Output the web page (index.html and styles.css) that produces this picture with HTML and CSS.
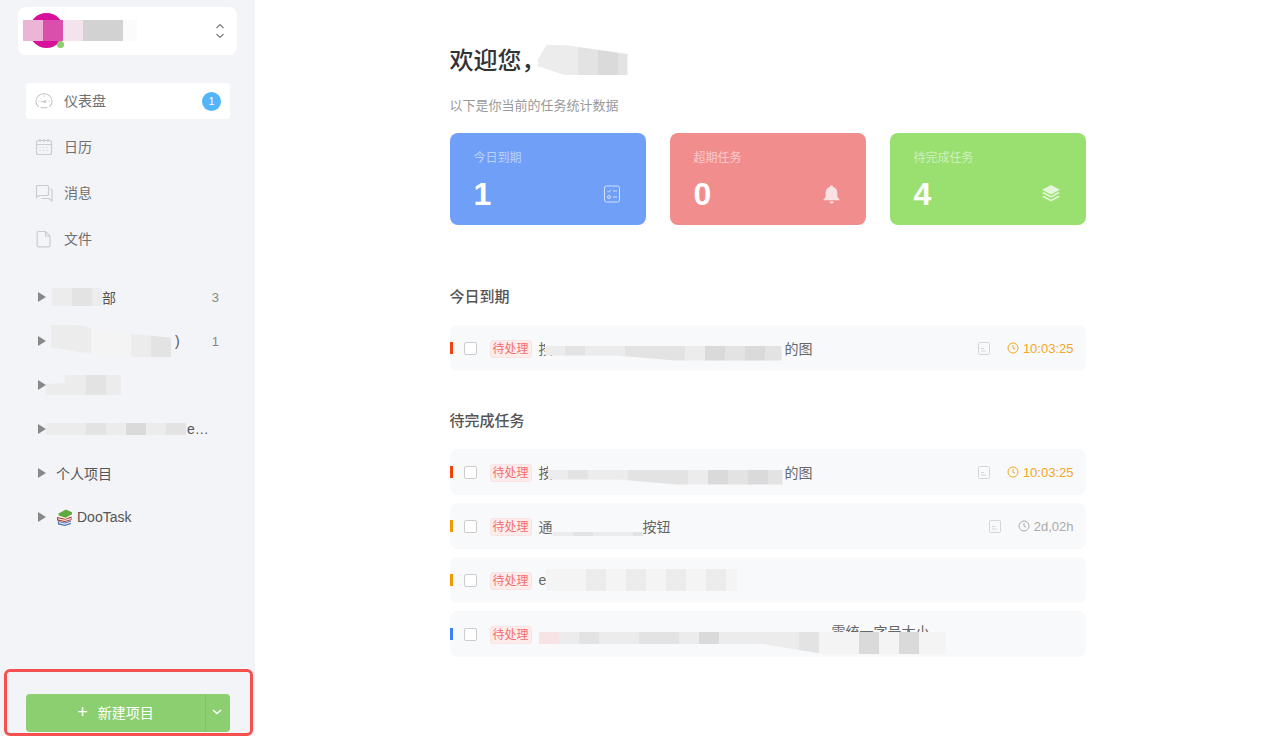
FILE: index.html
```html
<!DOCTYPE html>
<html lang="zh-CN">
<head>
    <meta charset="UTF-8">
    <meta name="viewport" content="width=device-width, initial-scale=1.0">
    <title>DooTask</title>
    <link rel="stylesheet" href="styles.css">
</head>
<body>
    <aside class="sidebar">
        <div class="user-box">
            <span class="avatar"><span class="online-dot"></span></span>
            <span class="redact redact-user"><i class="u1"></i><i class="u2"></i><i class="u3"></i><i class="u4"></i><i class="u4"></i><i class="u5"></i></span>
            <svg class="user-arrows" width="10" height="16" viewBox="0 0 10 16" fill="none" stroke="#777" stroke-width="1.1">
                <path d="M1.5 5 5 1.5 8.5 5"/>
                <path d="M1.5 11 5 14.5 8.5 11"/>
            </svg>
        </div>

        <ul class="menu">
            <li class="menu-item active">
                <svg class="menu-icon" width="18" height="18" viewBox="0 0 18 18" fill="none" stroke="#ccc" stroke-width="1.2">
                    <path d="M4 14.800C2.100 13.600 1 11.800 1 9.600a8 8 0 0 1 16 0c0 2.200-1.100 4-3 5.200"/>
                    <path d="M5.500 15.600h7M9 9.600H5.800M9 3.400v1.400M3.400 9h1.200M13.400 9h1.200"/>
                    <circle cx="10" cy="9.600" r="1"/>
                </svg>
                <span class="menu-label">仪表盘</span>
                <span class="menu-badge">1</span>
            </li>
            <li class="menu-item">
                <svg class="menu-icon" width="18" height="18" viewBox="0 0 18 18" fill="none" stroke="#ccc" stroke-width="1.2">
                    <rect x="1.5" y="2.5" width="15" height="14" rx="1.5"/>
                    <path d="M1.5 6.5h15M5 1v3M9 1v3M13 1v3"/>
                    <path d="M4.5 9.5h2M8 9.5h2M11.500 9.500h2M4.500 12.500h2M8 12.500h2M11.500 12.500h2" stroke-dasharray="1 1"/>
                </svg>
                <span class="menu-label">日历</span>
            </li>
            <li class="menu-item">
                <svg class="menu-icon" width="18" height="18" viewBox="0 0 18 18" fill="none" stroke="#ccc" stroke-width="1.2">
                    <path d="M2.800 1.500h9.400a1.300 1.300 0 0 1 1.300 1.300v7.400a1.300 1.300 0 0 1-1.300 1.300H4.500l-3 2V2.800a1.300 1.300 0 0 1 1.300-1.300z"/>
                    <path d="M15 5h1a1 1 0 0 1 1 1v11l-3-2.500H6.500"/>
                </svg>
                <span class="menu-label">消息</span>
            </li>
            <li class="menu-item">
                <svg class="menu-icon" width="18" height="18" viewBox="0 0 18 18" fill="none" stroke="#ccc" stroke-width="1.2">
                    <path d="M3.500 1.500h7l4.500 4.500v9.500a1.300 1.300 0 0 1-1.300 1.300H3.500a1.300 1.300 0 0 1-1.300-1.300V2.800a1.300 1.300 0 0 1 1.300-1.300z"/>
                    <path d="M10.500 1.500V6H15"/>
                </svg>
                <span class="menu-label">文件</span>
            </li>
        </ul>

        <ul class="projects">
            <li class="project">
                <span class="caret"></span>
                <span class="project-name"><span class="redact redact-p1"><i class="s1"></i><i class="s2"></i><i class="s1"></i></span>部</span>
                <span class="project-count">3</span>
            </li>
            <li class="project">
                <span class="caret"></span>
                <span class="project-name"><span class="redact redact-p2"><i class="s1"></i><i class="s1"></i><i class="s0"></i><i class="s0"></i><i class="s1"></i><i class="s2"></i></span>)</span>
                <span class="project-count">1</span>
            </li>
            <li class="project">
                <span class="caret"></span>
                <span class="project-name"><span class="redact redact-p3"><i class="s1"></i><i class="s1"></i><i class="s2"></i><i class="s1"></i></span></span>
            </li>
            <li class="project">
                <span class="caret"></span>
                <span class="project-name"><span class="redact redact-p4"><i class="s1"></i><i class="s1"></i><i class="s2"></i><i class="s1"></i><i class="s3"></i><i class="s1"></i><i class="s2"></i></span>e…</span>
            </li>
            <li class="project">
                <span class="caret"></span>
                <span class="project-name">个人项目</span>
            </li>
            <li class="project">
                <span class="caret"></span>
                <svg class="book-icon" width="17" height="17" viewBox="0 0 17 17">
                    <path d="M2 12 9 13.500l6-2v3.500l-6 2-7-1.500z" fill="#4a6fb5"/>
                    <path d="M3 13 9 14.500l6-2v1.300L9 15.800 3 14.300z" fill="#eef0f4"/>
                    <path d="M1 8 9 9.500l6.500-2v3.500L9 13 1 11.500z" fill="#b8382f"/>
                    <path d="M2 9.300 9 10.800l6-1.800v1.200L9 12 2 10.500z" fill="#f2efe6"/>
                    <path d="M2.500 4.500 10 .5l6 2.800v2L9.500 9 2.500 6.500z" fill="#5fa83c"/>
                    <path d="M2.500 6.500 9.500 9l6-3.200v1.200L9.500 10 2.500 7.800z" fill="#f2efe6"/>
                </svg>
                <span class="project-name">DooTask</span>
            </li>
        </ul>

        <div class="new-project">
            <button class="new-btn"><span class="plus">+</span>新建项目</button>
            <button class="new-drop">
                <svg width="10" height="6" viewBox="0 0 10 6" fill="none" stroke="#fff" stroke-width="1.400"><path d="M1 1l4 3.500L9 1"/></svg>
            </button>
        </div>
        <div class="highlight-box"></div>
    </aside>

    <main class="content">
        <div class="dashboard">
            <h1 class="welcome">欢迎您，<span class="redact redact-name"><i class="s1"></i><i class="s1"></i><i class="s2"></i><i class="s3"></i><i class="s2"></i></span></h1>
            <p class="subtitle">以下是你当前的任务统计数据</p>

            <div class="stat-cards">
                <div class="stat-card blue">
                    <div class="stat-label">今日到期</div>
                    <div class="stat-row">
                        <span class="stat-num">1</span>
                        <svg class="stat-icon" width="16" height="18" viewBox="0 0 16 18" fill="none" stroke="#fff" stroke-width="1">
                            <rect x=".5" y="1" width="15" height="16" rx="2"/>
                            <path d="M3.500 6l1.200 1.200L7 4.800M9 6h4"/>
                            <circle cx="5" cy="12" r="1.500"/>
                            <path d="M9 12h4"/>
                        </svg>
                    </div>
                </div>
                <div class="stat-card red">
                    <div class="stat-label">超期任务</div>
                    <div class="stat-row">
                        <span class="stat-num">0</span>
                        <svg class="stat-icon big" width="19" height="21" viewBox="0 0 16 18" fill="#fff">
                            <path d="M8 1a1.300 1.300 0 0 1 1.300 1.300C11.600 3 13 5 13 7.500V11l2 2.500v.5H1v-.5L3 11V7.500C3 5 4.400 3 6.700 2.300A1.300 1.300 0 0 1 8 1z"/>
                            <path d="M6.200 15h3.600a1.800 1.800 0 0 1-3.600 0z"/>
                        </svg>
                    </div>
                </div>
                <div class="stat-card green">
                    <div class="stat-label">待完成任务</div>
                    <div class="stat-row">
                        <span class="stat-num">4</span>
                        <svg class="stat-icon big" width="20" height="20" viewBox="0 0 18 18" fill="#fff">
                            <path d="M9 1l8 4.200-8 4.300-8-4.300z"/>
                            <path d="M1 8l1.500-.8L9 10.700l6.500-3.500L17 8l-8 4.300z"/>
                            <path d="M1 11.400l1.500-.8L9 14.100l6.500-3.500 1.500.8-8 4.300z"/>
                        </svg>
                    </div>
                </div>
            </div>

            <h2 class="section-title first">今日到期</h2>
            <ul class="task-list">
                <li class="task">
                    <span class="task-bar red-bar"></span>
                    <span class="task-check"></span>
                    <span class="task-tag">待处理</span>
                    <span class="task-title">按<span class="redact redact-t1"><i class="s1"></i><i class="s2"></i><i class="s1"></i><i class="s1"></i><i class="s2"></i><i class="s2"></i><i class="s2"></i><i class="s1"></i><i class="s3"></i><i class="s2"></i><i class="s3"></i><i class="s2"></i></span>的图</span>
                    <svg class="task-file" width="12" height="13" viewBox="0 0 12 13" fill="none" stroke="#d4d6da"><rect x=".5" y=".5" width="11" height="12" rx="1"/><path d="M3 6.500h3M3 9h5"/></svg>
                    <span class="task-time soon"><svg width="12" height="12" viewBox="0 0 12 12" fill="none" stroke="currentColor"><circle cx="6" cy="6" r="5"/><path d="M6 3v3.200l2 1"/></svg>10:03:25</span>
                </li>
            </ul>

            <h2 class="section-title">待完成任务</h2>
            <ul class="task-list">
                <li class="task">
                    <span class="task-bar red-bar"></span>
                    <span class="task-check"></span>
                    <span class="task-tag">待处理</span>
                    <span class="task-title">按<span class="redact redact-t1 short"><i class="s1"></i><i class="s2"></i><i class="s1"></i><i class="s1"></i><i class="s2"></i><i class="s2"></i><i class="s2"></i><i class="s1"></i><i class="s3"></i><i class="s2"></i><i class="s3"></i><i class="s2"></i></span>的图</span>
                    <svg class="task-file" width="12" height="13" viewBox="0 0 12 13" fill="none" stroke="#d4d6da"><rect x=".5" y=".5" width="11" height="12" rx="1"/><path d="M3 6.500h3M3 9h5"/></svg>
                    <span class="task-time soon"><svg width="12" height="12" viewBox="0 0 12 12" fill="none" stroke="currentColor"><circle cx="6" cy="6" r="5"/><path d="M6 3v3.200l2 1"/></svg>10:03:25</span>
                </li>
                <li class="task">
                    <span class="task-bar orange-bar"></span>
                    <span class="task-check"></span>
                    <span class="task-tag">待处理</span>
                    <span class="task-title">通<span class="redact redact-t2"><i class="s1"></i><i class="s2"></i><i class="s1"></i><i class="s1"></i><i class="s2"></i></span>按钮</span>
                    <svg class="task-file" width="12" height="13" viewBox="0 0 12 13" fill="none" stroke="#d4d6da"><rect x=".5" y=".5" width="11" height="12" rx="1"/><path d="M3 6.500h3M3 9h5"/></svg>
                    <span class="task-time"><svg width="12" height="12" viewBox="0 0 12 12" fill="none" stroke="currentColor"><circle cx="6" cy="6" r="5"/><path d="M6 3v3.200l2 1"/></svg>2d,02h</span>
                </li>
                <li class="task">
                    <span class="task-bar orange-bar"></span>
                    <span class="task-check"></span>
                    <span class="task-tag">待处理</span>
                    <span class="task-title">e<span class="redact redact-t3"><i class="s0"></i><i class="s0"></i><i class="s1"></i><i class="s0"></i><i class="s1"></i><i class="s0"></i><i class="s1"></i><i class="s0"></i><i class="s1"></i><i class="s0"></i></span></span>
                </li>
                <li class="task">
                    <span class="task-bar blue-bar"></span>
                    <span class="task-check"></span>
                    <span class="task-tag">待处理</span>
                    <span class="task-title long">需统一字号大小<span class="redact redact-t4"><i class="s4"></i><i class="s1"></i><i class="s2"></i><i class="s1"></i><i class="s1"></i><i class="s2"></i><i class="s2"></i><i class="s1"></i><i class="s3"></i><i class="s1"></i><i class="s1"></i><i class="s1"></i><i class="s1"></i><i class="s2"></i><i class="s0"></i><i class="s0"></i><i class="s3"></i><i class="s0"></i><i class="s3"></i><i class="s0"></i><i class="s0"></i></span></span>
                </li>
            </ul>
        </div>
    </main>
</body>
</html>
```
FILE: styles.css
```css
* {
    margin: 0;
    padding: 0;
    box-sizing: border-box;
}

html, body {
    height: 100%;
    overflow: hidden;
}

body {
    display: flex;
    font-family: "Liberation Sans", "Noto Sans CJK SC", sans-serif;
    font-size: 14px;
    color: #555;
    background: #fff;
}

ul {
    list-style: none;
}

/* Mosaic blocks that hide names */
.redact {
    display: inline-flex;
    overflow: hidden;
    vertical-align: top;
}

.redact i {
    flex: 0 0 20px;
    height: 100%;
}

.s0 { background: #f4f4f5; }
.s1 { background: #ececed; }
.s2 { background: #e3e3e4; }
.s3 { background: #dadadb; }
.s4 { background: #f7e3e6; }

/* Sidebar */
.sidebar {
    position: relative;
    flex: 0 0 255px;
    height: 736px;
    background: #f3f4f7;
    padding: 7px 18px 0;
}

.user-box {
    position: relative;
    display: flex;
    align-items: center;
    justify-content: flex-end;
    height: 48px;
    padding-right: 12px;
    background: #fff;
    border-radius: 8px;
}

.avatar {
    position: absolute;
    left: 11px;
    top: 6px;
    width: 35px;
    height: 35px;
    border-radius: 50%;
    background: #d8119a;
}

.online-dot {
    position: absolute;
    right: 0;
    bottom: 0;
    width: 7px;
    height: 7px;
    border-radius: 50%;
    background: #8bcf70;
}

.redact-user {
    position: absolute;
    left: 5px;
    top: 13px;
    width: 114px;
    height: 21px;
}

.u1 { background: #edb5d5; }
.u2 { background: #d94fab; }
.u3 { background: #f4e2ec; }
.u4 { background: #d2d2d2; }
.u5 { background: #fbfbfb; }

.menu {
    margin: 28px 7px 0 8px;
}

.menu-item {
    display: flex;
    align-items: center;
    height: 36px;
    margin-bottom: 10px;
    padding: 0 9px;
    border-radius: 4px;
    color: #707070;
}

.menu-item.active {
    background: #fff;
}

.menu-icon {
    flex-shrink: 0;
    margin-right: 11px;
}

.menu-label {
    flex: 1;
    padding-bottom: 2px;
}

.menu-badge {
    width: 19px;
    height: 19px;
    line-height: 19px;
    text-align: center;
    font-size: 11px;
    color: #fff;
    background: #52b5fa;
    border-radius: 50%;
}

.projects {
    margin: 18px 0 0 20px;
}

.project {
    display: flex;
    align-items: center;
    height: 44px;
    width: 181px;
    color: #555;
}

.caret {
    flex-shrink: 0;
    width: 0;
    height: 0;
    margin-right: 10px;
    border-left: 8px solid #888;
    border-top: 5px solid transparent;
    border-bottom: 5px solid transparent;
}

.project-name {
    flex: 1;
    display: flex;
    align-items: center;
    white-space: nowrap;
}

.project-count {
    font-size: 13px;
    color: #888;
}

.redact-p1 {
    width: 50px;
    height: 18px;
    margin-left: -4px;
}

.redact-p2 {
    width: 121px;
    height: 32px;
    margin: 0 3px 0 -5px;
    clip-path: polygon(0 0, 22% 0, 45% 20%, 100% 40%, 100% 100%, 70% 100%, 25% 85%, 0 70%);
}

.redact-p3 {
    width: 75px;
    height: 20px;
    margin-left: -10px;
    clip-path: polygon(0 45%, 25% 40%, 25% 0, 100% 0, 100% 100%, 0 100%);
}

.redact-p4 {
    width: 141px;
    height: 12px;
    margin-left: -10px;
    flex-shrink: 0;
}

.book-icon {
    flex-shrink: 0;
    margin-right: 4px;
}

.new-project {
    position: absolute;
    left: 26px;
    top: 694px;
    display: flex;
    width: 204px;
    height: 38px;
}

.new-btn,
.new-drop {
    display: flex;
    align-items: center;
    justify-content: center;
    padding-bottom: 2px;
    border: none;
    background: #8bcf70;
    color: #fff;
    font: inherit;
}

.new-btn {
    flex: 1;
    border-radius: 4px 0 0 4px;
}

.plus {
    margin-right: 10px;
    font-size: 18px;
    font-weight: 300;
}

.new-drop {
    flex: 0 0 25px;
    padding-right: 2px;
    border-left: 1px solid #82c268;
    border-radius: 0 4px 4px 0;
}

.highlight-box {
    position: absolute;
    left: 4px;
    top: 669px;
    width: 249px;
    height: 67px;
    border: 3px solid #f55050;
    border-radius: 6px;
    pointer-events: none;
}

/* Main area */
.content {
    flex: 1;
    height: 736px;
}

.dashboard {
    width: 636px;
    margin: 0 auto;
    padding-top: 45px;
}

.welcome {
    display: flex;
    align-items: center;
    height: 30px;
    padding-bottom: 3px;
    font-size: 24px;
    font-weight: 500;
    color: #333;
}

.redact-name {
    width: 90px;
    height: 30px;
    flex-shrink: 0;
    margin: 3px 0 0 -8px;
    clip-path: polygon(0 50%, 10% 0, 30% 0, 100% 30%, 100% 100%, 30% 100%, 0 70%);
}

.subtitle {
    margin-top: 22px;
    height: 18px;
    line-height: 18px;
    font-size: 13px;
    color: #999;
}

.stat-cards {
    display: flex;
    gap: 24px;
    margin-top: 18px;
}

.stat-card {
    flex: 0 0 196px;
    height: 92px;
    padding: 17px 24px 0;
    border-radius: 8px;
    color: #fff;
}

.stat-card.blue { background: #6f9ff7; }
.stat-card.red { background: #f28d8d; }
.stat-card.green { background: #9ae070; }

.stat-label {
    height: 16px;
    line-height: 16px;
    font-size: 12px;
    color: rgba(255, 255, 255, 0.55);
}

.stat-row {
    display: flex;
    align-items: center;
    justify-content: space-between;
    height: 36px;
    margin-top: 10px;
    padding-right: 2px;
}

.stat-num {
    font-size: 32px;
    font-weight: 700;
}

.stat-icon {
    opacity: 0.7;
}

.stat-icon.big {
    margin-right: -1px;
    opacity: 0.75;
}

.section-title {
    height: 22px;
    line-height: 22px;
    margin-top: 39px;
    font-size: 15px;
    font-weight: 500;
    color: #555;
}

.section-title.first {
    margin-top: 61px;
}

.task-list {
    margin-top: 17px;
}

.task {
    position: relative;
    display: flex;
    align-items: center;
    height: 46px;
    margin-bottom: 8px;
    padding: 0 12px 0 14px;
    background: #f8f9fb;
    border-radius: 8px;
}

.task-bar {
    position: absolute;
    left: 0;
    top: 17px;
    width: 3px;
    height: 12px;
}

.red-bar { background: #f0430f; }
.orange-bar { background: #f09a00; }
.blue-bar { background: #3b82f6; }

.task-check {
    flex-shrink: 0;
    width: 13px;
    height: 13px;
    margin-right: 13px;
    background: #fff;
    border: 1px solid #ccc;
    border-radius: 2px;
}

.task-tag {
    flex-shrink: 0;
    height: 18px;
    line-height: 16px;
    padding: 0 2px;
    margin: 2px 7px 0 0;
    font-size: 12px;
    color: #f56c6c;
    background: #fdecec;
    border: 1px solid #fae3e3;
    border-radius: 3px;
}

.task-title {
    flex: 1;
    display: flex;
    align-items: center;
    height: 22px;
    white-space: nowrap;
    color: #666;
}

.task-title.long {
    position: relative;
    padding-left: 293px;
    align-items: flex-start;
    line-height: 18px;
}

/* the mosaic lies over the right part of the first character,
   the top border is row coloured so it hides the top of it too */
.redact-t1 {
    width: 237px;
    height: 22px;
    flex-shrink: 0;
    margin: 3px 3px 0 -8px;
    border-top: 7px solid #f8f9fb;
    clip-path: polygon(0 0, 100% 0, 100% 100%, 55% 100%, 30% 77%, 0 77%);
}

.redact-t1.short {
    width: 235px;
    margin: 3px 2px 0 -5px;
}

.redact-t2 {
    width: 90px;
    height: 4px;
    margin-top: 16px;
}

.redact-t3 {
    width: 191px;
    height: 22px;
    flex-shrink: 0;
}

.redact-t4 {
    position: absolute;
    left: 0;
    top: 9px;
    width: 407px;
    height: 22px;
    clip-path: polygon(0 0, 100% 0, 100% 100%, 70% 100%, 55% 55%, 0 55%);
}

.task-file {
    flex-shrink: 0;
    margin-right: 17px;
}

.task-time {
    display: flex;
    align-items: center;
    gap: 4px;
    font-size: 13px;
    color: #aaa;
}

.task-time.soon {
    color: #f5a623;
}
```
